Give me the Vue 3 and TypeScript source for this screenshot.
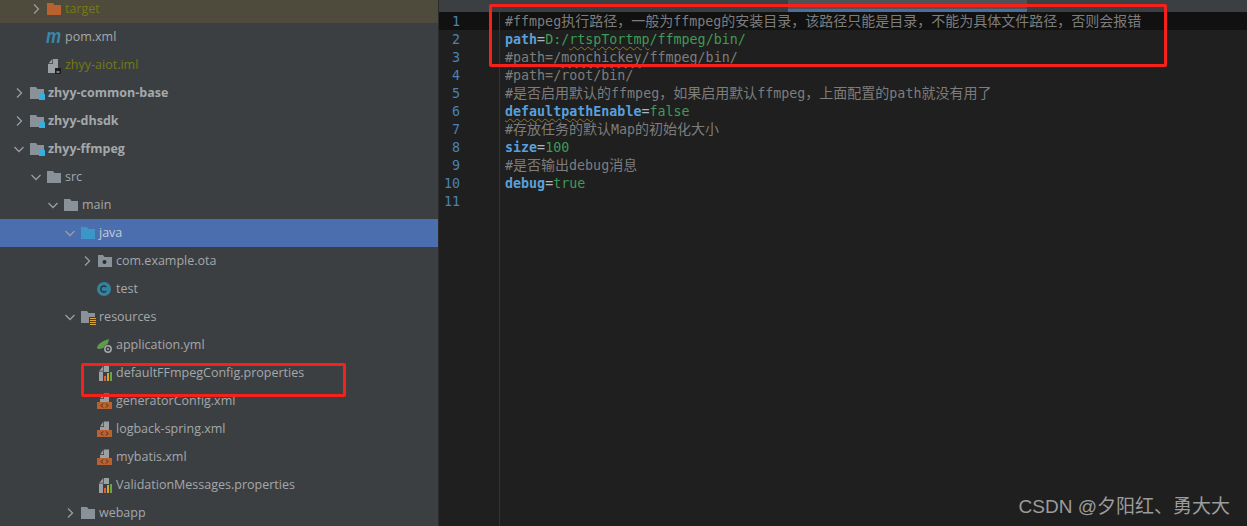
<script setup lang="ts">
interface Row {
  name: string;
  depth: number;
  arrow?: 'right' | 'down';
  icon: string;
  cls?: string;
}
interface Seg {
  t: string;
  c: string;
  z?: boolean;
  w?: boolean;
}

const rows: Row[] = [
  { name: 'target', depth: 1, arrow: 'right', icon: 'excluded', cls: 'ignored top' },
  { name: 'pom.xml', depth: 1, icon: 'maven' },
  { name: 'zhyy-aiot.iml', depth: 1, icon: 'iml', cls: 'ignored' },
  { name: 'zhyy-common-base', depth: 0, arrow: 'right', icon: 'module', cls: 'bold' },
  { name: 'zhyy-dhsdk', depth: 0, arrow: 'right', icon: 'module', cls: 'bold' },
  { name: 'zhyy-ffmpeg', depth: 0, arrow: 'down', icon: 'module', cls: 'bold' },
  { name: 'src', depth: 1, arrow: 'down', icon: 'folder' },
  { name: 'main', depth: 2, arrow: 'down', icon: 'folder' },
  { name: 'java', depth: 3, arrow: 'down', icon: 'source', cls: 'selected' },
  { name: 'com.example.ota', depth: 4, arrow: 'right', icon: 'package' },
  { name: 'test', depth: 4, icon: 'class' },
  { name: 'resources', depth: 3, arrow: 'down', icon: 'resources' },
  { name: 'application.yml', depth: 4, icon: 'spring' },
  { name: 'defaultFFmpegConfig.properties', depth: 4, icon: 'props' },
  { name: 'generatorConfig.xml', depth: 4, icon: 'xml' },
  { name: 'logback-spring.xml', depth: 4, icon: 'xml' },
  { name: 'mybatis.xml', depth: 4, icon: 'xml' },
  { name: 'ValidationMessages.properties', depth: 4, icon: 'props' },
  { name: 'webapp', depth: 3, arrow: 'right', icon: 'folder' },
];

const c = (t: string): Seg => ({ t, c: 'comment' });
const z = (t: string): Seg => ({ t, c: 'comment', z: true });
const lines: Seg[][] = [
  [c('#ffmpeg'), z('执行路径，一般为'), c('ffmpeg'), z('的安装目录，该路径只能是目录，不能为具体文件路径，否则会报错')],
  [{ t: 'path', c: 'key' }, { t: '=', c: 'eq' }, { t: 'D:/', c: 'val' }, { t: 'rtspTortmp', c: 'val', w: true }, { t: '/ffmpeg/bin/', c: 'val' }],
  [c('#path=/'), { t: 'monchickey', c: 'comment', w: true }, c('/ffmpeg/bin/')],
  [c('#path=/root/bin/')],
  [c('#'), z('是否启用默认的'), c('ffmpeg'), z('，如果启用默认'), c('ffmpeg'), z('，上面配置的'), c('path'), z('就没有用了')],
  [{ t: 'defaultpath', c: 'key', w: true }, { t: 'Enable', c: 'key' }, { t: '=', c: 'eq' }, { t: 'false', c: 'val' }],
  [c('#'), z('存放任务的默认'), c('Map'), z('的初始化大小')],
  [{ t: 'size', c: 'key' }, { t: '=', c: 'eq' }, { t: '100', c: 'val' }],
  [c('#'), z('是否输出'), c('debug'), z('消息')],
  [{ t: 'debug', c: 'key' }, { t: '=', c: 'eq' }, { t: 'true', c: 'val' }],
  [],
];
</script>

<template>
  <div class="screen">
    <aside class="tree">
      <div class="tree-inner">
        <div
          v-for="r in rows"
          :key="r.name"
          class="row"
          :class="r.cls"
          :style="{ paddingLeft: 10 + r.depth * 17 + 'px' }"
        >
          <span class="arrow">
            <svg v-if="r.arrow" width="12" height="12" viewBox="0 0 12 12" fill="none" stroke="#9a9da0" stroke-width="1.3">
              <path v-if="r.arrow === 'right'" d="M4 1.5 8.5 6 4 10.5" />
              <path v-else d="M1.5 4 6 8.5 10.5 4" />
            </svg>
          </span>
          <span class="icon">
            <svg class="glyph" width="16" height="16" viewBox="0 0 16 16">
              <template v-if="r.icon === 'folder'">
                <path d="M1 2h6l1.5 2H15v10H1z" fill="#8a9299" />
              </template>
              <template v-else-if="r.icon === 'excluded'">
                <path d="M1 2h6l1.5 2H15v10H1z" fill="#b9622f" />
              </template>
              <template v-else-if="r.icon === 'source'">
                <path d="M1 2h6l1.5 2H15v10H1z" fill="#3d96c9" />
              </template>
              <template v-else-if="r.icon === 'module'">
                <path d="M1 2h6l1.5 2H15v10H1z" fill="#8a9299" />
                <rect x="10" y="9" width="6" height="6" fill="#35aee2" />
              </template>
              <template v-else-if="r.icon === 'package'">
                <path d="M1 2h5l1.5 2H15v10H1z" fill="#8a9299" />
                <circle cx="7.5" cy="9" r="2" fill="#2b2d2f" />
              </template>
              <template v-else-if="r.icon === 'resources'">
                <path d="M1 2h6l1.5 2H15v10H1z" fill="#8a9299" />
                <rect x="9" y="8" width="7" height="8" fill="#3c3f41" />
                <path d="M10 9.5h6M10 11.5h6M10 13.5h6M10 15.5h6" stroke="#d9a343" stroke-width="1" />
              </template>
              <template v-else-if="r.icon === 'class'">
                <circle cx="7" cy="8" r="7" fill="#35829f" />
                <path d="M9.2 6.2A3 3 0 1 0 9.2 9.8" fill="none" stroke="#23343d" stroke-width="1.4" />
              </template>
              <template v-else-if="r.icon === 'maven'">
                <text x="0" y="12.2" transform="scale(1 1.15)" class="maven">m</text>
              </template>
              <template v-else-if="r.icon === 'iml'">
                <path d="M7 2h5v14H2V7h5z" fill="#9aa0a4" />
                <path d="M6.3 2v4.3H2.6z" fill="#9aa0a4" />
                <rect x="9" y="11" width="6" height="6" fill="#1e1e1e" />
                <rect x="10.5" y="14.5" width="3" height="1" fill="#e8e8e8" />
              </template>
              <template v-else-if="r.icon === 'spring'">
                <path d="M0 11C1 6 6 4 12 2c-1 5-2 8-7 9.500-2 .4-4 1-5-.5z" fill="#5c9c4a" />
                <circle cx="11" cy="12" r="4.500" fill="#3c3f41" />
                <circle cx="11" cy="12" r="3.200" fill="none" stroke="#a4a8ab" stroke-width="1.500" />
                <circle cx="11" cy="12" r="1" fill="#a4a8ab" />
              </template>
              <template v-else-if="r.icon === 'props'">
                <path d="M7 1h5v6H6v9H2V6.500h5z" fill="#9aa0a4" />
                <path d="M6.300 1v4.700H2.400z" fill="#9aa0a4" />
                <rect x="7" y="11" width="2" height="5" fill="#d9622f" />
                <rect x="10" y="8" width="2" height="8" fill="#dba032" />
                <rect x="13" y="7" width="2" height="9" fill="#62a84a" />
              </template>
              <template v-else-if="r.icon === 'xml'">
                <path d="M7 .5h5V9H3V6h4z" fill="#9aa0a4" />
                <path d="M6.300 .5v4.800H3.300z" fill="#9aa0a4" />
                <rect x="0" y="9" width="15" height="7" fill="#b9622f" />
                <path d="M6 10.500 4 12.500l2 2M9 10.500l2 2-2 2" fill="none" stroke="#3c2a1c" stroke-width="1" />
              </template>
            </svg>
          </span>
          <span class="label">{{ r.name }}</span>
        </div>
      </div>
    </aside>

    <main class="editor">
      <div class="tabs"><div class="tab"></div></div>
      <div class="body">
        <div class="gutter">
          <div v-for="(_, i) in lines" :key="i" class="num" :class="{ current: i === 0 }">{{ i + 1 }}</div>
        </div>
        <div class="code">
          <div v-for="(l, i) in lines" :key="i" class="line" :class="{ current: i === 0 }">
            <span v-for="(s, j) in l" :key="j" :class="[s.c, { cjk: s.z, weak: s.w }]">{{ s.t }}</span>
          </div>
        </div>
      </div>
    </main>

    <div class="mark mark-code"></div>
    <div class="mark mark-file"></div>
    <div class="watermark">CSDN @夕阳红、勇大大</div>
  </div>
</template>

<style>
html, body { margin: 0; background: #1f1f1f; }
</style>

<style scoped>
.screen {
  position: relative;
  display: flex;
  width: 1247px;
  height: 526px;
  overflow: hidden;
  background: #1f1f1f;
}
.tree {
  width: 439px;
  flex: none;
  box-sizing: border-box;
  background: #3c3f41;
  overflow: hidden;
  border-right: 1px solid #2b2b2b;
  font: 12.5px "Open Sans", "Noto Sans", sans-serif;
  color: #a4a8ab;
}
.tree-inner { margin-top: -5px; }
.row {
  display: flex;
  align-items: center;
  height: 28px;
  box-sizing: border-box;
  white-space: nowrap;
}
.row.top { background: #4e4a3c; }
.row.selected { background: #4b6eaf; color: #c5cdd8; }
.row.ignored { color: #747a12; }
.row.bold { font-weight: 700; }
.arrow { width: 20px; flex: none; display: flex; justify-content: center; margin-left: -1px; padding-right: 1px; box-sizing: border-box; }
.icon { width: 19px; flex: none; display: flex; height: 16px; }
.glyph { overflow: visible; }
.label { padding-bottom: 2px; }
.maven { font: italic 700 17px "Liberation Sans", sans-serif; fill: #3a86ad; }
.editor { flex: 1; display: flex; flex-direction: column; min-width: 0; }
.tabs { height: 12px; flex: none; background: #3c3f41; display: flex; padding-left: 349px; }
.tab { width: 239px; background: #4e5254; border-bottom: 3px solid #4a6f9f; box-sizing: border-box; }
.body {
  flex: 1;
  display: flex;
  background: #1f1f1f;
  font: 13.33px/18px "DejaVu Sans Mono", "Liberation Mono", "Noto Sans CJK SC", monospace;
}
.gutter { width: 61px; flex: none; border-right: 1px solid #333; box-sizing: border-box; }
.num { height: 18px; padding: 1px 39px 0 0; box-sizing: border-box; text-align: right; color: #4a82b4; }
.num.current { background: #111; }
.code { flex: 1; min-width: 0; }
.line { height: 18px; padding: 1px 0 0 5px; box-sizing: border-box; white-space: pre; }
.line.current { background: #111; }
.comment { color: #7d7d7d; }
.key { color: #5a9fdc; font-weight: 700; }
.eq { color: #a9b7c6; }
.val { color: #3f9a56; }
.cjk { font: 14px/0 "Noto Sans CJK SC", sans-serif; }
.weak { text-decoration: underline wavy #8a7a28 1px; text-underline-offset: 2px; }
.mark { position: absolute; border: 3px solid #f5211a; border-radius: 2px; box-sizing: border-box; pointer-events: none; }
.mark-code { left: 489px; top: 4px; width: 678px; height: 63px; }
.mark-file { left: 81px; top: 363px; width: 265px; height: 34px; }
.watermark {
  position: absolute;
  right: 17px;
  top: 494px;
  font: 19px/26px "Liberation Sans", "Noto Sans CJK SC", sans-serif;
  color: #9c9c9c;
  white-space: nowrap;
}
</style>
